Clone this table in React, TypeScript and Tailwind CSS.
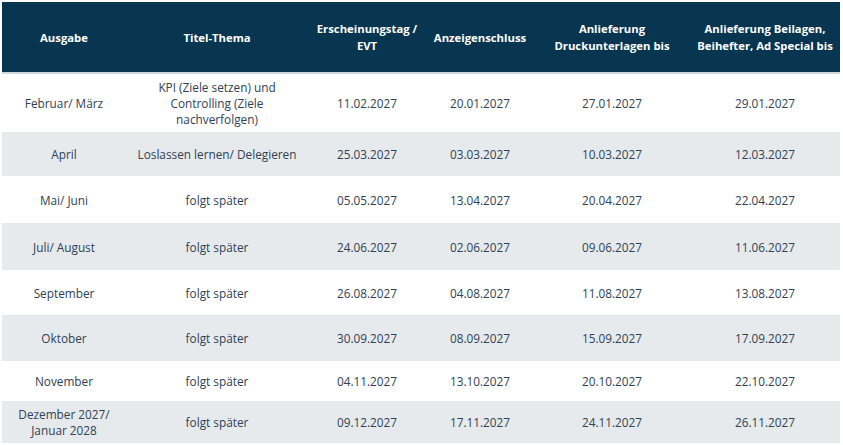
const headers = [
  'Ausgabe',
  'Titel-Thema',
  'Erscheinungstag / EVT',
  'Anzeigenschluss',
  'Anlieferung Druckunterlagen bis',
  'Anlieferung Beilagen, Beihefter, Ad Special bis',
];

const widths = ['w-[124px]', 'w-[182px]', 'w-[118px]', 'w-[108px]', 'w-[156px]', 'w-[150px]'];

type Row = { h: string; cells: string[] };

const rows: Row[] = [
  { h: 'h-[59px]', cells: ['Februar/ März', 'KPI (Ziele setzen) und Controlling (Ziele nachverfolgen)', '11.02.2027', '20.01.2027', '27.01.2027', '29.01.2027'] },
  { h: 'h-[44px]', cells: ['April', 'Loslassen lernen/ Delegieren', '25.03.2027', '03.03.2027', '10.03.2027', '12.03.2027'] },
  { h: 'h-[47px]', cells: ['Mai/ Juni', 'folgt später', '05.05.2027', '13.04.2027', '20.04.2027', '22.04.2027'] },
  { h: 'h-[47px]', cells: ['Juli/ August', 'folgt später', '24.06.2027', '02.06.2027', '09.06.2027', '11.06.2027'] },
  { h: 'h-[45px]', cells: ['September', 'folgt später', '26.08.2027', '04.08.2027', '11.08.2027', '13.08.2027'] },
  { h: 'h-[46px]', cells: ['Oktober', 'folgt später', '30.09.2027', '08.09.2027', '15.09.2027', '17.09.2027'] },
  { h: 'h-[40px]', cells: ['November', 'folgt später', '04.11.2027', '13.10.2027', '20.10.2027', '22.10.2027'] },
  { h: 'h-[42px]', cells: ['Dezember 2027/ Januar 2028', 'folgt später', '09.12.2027', '17.11.2027', '24.11.2027', '26.11.2027'] },
];

export default function App() {
  return (
    <div className="w-[843px] h-[445px] bg-white pt-[2px] pl-[2px] font-['Open_Sans',sans-serif] overflow-hidden">
      <table className="table-fixed border-collapse w-[838px]">
        <colgroup>
          {widths.map((w, i) => (
            <col key={i} className={w} />
          ))}
        </colgroup>
        <thead>
          <tr className="h-[71px] bg-[#08354f] border-b-2 border-[#cdd8df]">
            {headers.map((h) => (
              <th key={h} className="px-1 text-center align-middle text-[11.3px] leading-[17px] font-bold text-white">
                {h}
              </th>
            ))}
          </tr>
        </thead>
        <tbody>
          {rows.map((r, i) => (
            <tr key={r.cells[0]} className={`${r.h} ${i % 2 === 1 ? 'bg-[#e6eaed]' : 'bg-white'}`}>
              {r.cells.map((c, j) => (
                <td
                  key={j}
                  className={`text-center align-middle text-[11.8px] leading-[16px] text-[#2f4254] ${j === 0 ? 'px-3' : 'px-1'}`}
                >
                  {c}
                </td>
              ))}
            </tr>
          ))}
        </tbody>
      </table>
    </div>
  );
}
